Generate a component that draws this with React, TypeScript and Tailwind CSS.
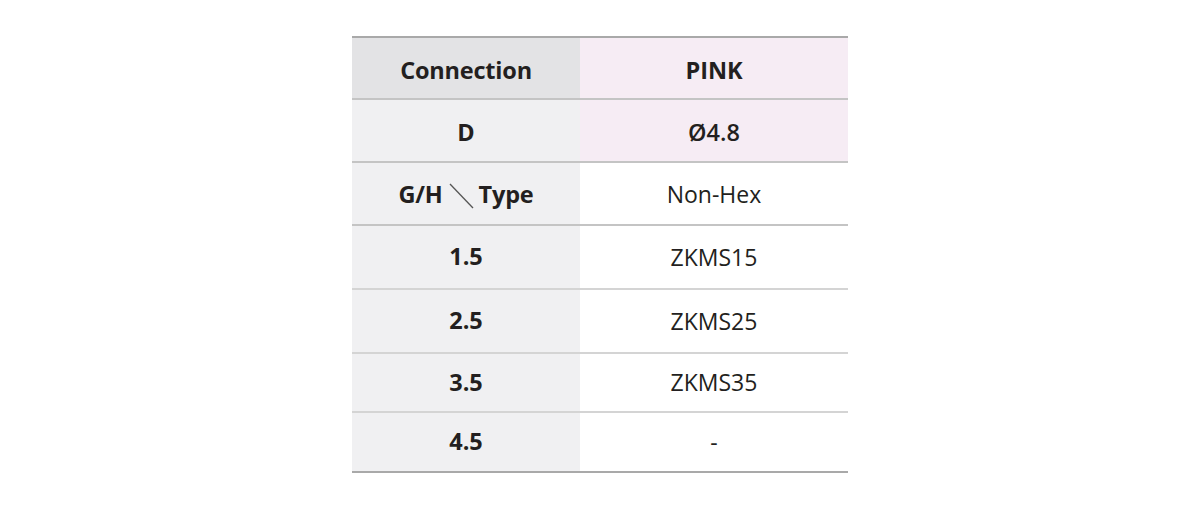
const rows = [
  { label: "1.5", value: "ZKMS15", h: "h-[64px]" },
  { label: "2.5", value: "ZKMS25", h: "h-[64px]" },
  { label: "3.5", value: "ZKMS35", h: "h-[59px]" },
  { label: "4.5", value: "-", h: "h-[58px]" },
];

export default function App() {
  return (
    <div className="w-[1200px] h-[510px] bg-white flex justify-center pt-[36px] font-['Open_Sans',sans-serif] text-[#231f20]">
      <div className="w-[496px] h-fit border-t-2 border-b-2 border-[#a9a9a9]">
        <div className="flex h-[62px] border-b-2 border-[#c4c4c4]">
          <div className="w-[228px] bg-[#e3e3e5] flex items-center justify-center pt-[6px] text-[23.5px] font-bold tracking-[-0.2px]">
            Connection
          </div>
          <div className="flex-1 bg-[#f6ecf4] flex items-center justify-center pt-[6px] text-[23.5px] font-bold">
            PINK
          </div>
        </div>
        <div className="flex h-[63px] border-b-2 border-[#c4c4c4]">
          <div className="w-[228px] bg-[#f0f0f2] flex items-center justify-center pt-[4px] text-[23.5px] font-bold">
            D
          </div>
          <div className="flex-1 bg-[#f6ecf4] flex items-center justify-center pt-[4px] text-[23.5px] font-semibold">
            Ø4.8
          </div>
        </div>
        <div className="flex h-[63px] border-b-2 border-[#c4c4c4]">
          <div className="w-[228px] bg-[#f0f0f2] flex items-center justify-center gap-[5px] pt-[2px] text-[23.5px] font-bold tracking-[-0.2px]">
            <span>G/H</span>
            <svg width="26" height="26" viewBox="0 0 26 26" className="mt-[2px]">
              <line x1="2" y1="1" x2="25" y2="25" stroke="#555" strokeWidth="1.3" />
            </svg>
            <span>Type</span>
          </div>
          <div className="flex-1 bg-white flex items-center justify-center pt-[2px] text-[23px]">
            Non-Hex
          </div>
        </div>
        {rows.map((r, i) => (
          <div
            key={r.label}
            className={`flex ${r.h} ${i < rows.length - 1 ? "border-b-2 border-[#d4d4d4]" : ""}`}
          >
            <div className="w-[228px] bg-[#f0f0f2] flex items-center justify-center text-[23.5px] font-bold">
              {r.label}
            </div>
            <div className="flex-1 bg-white flex items-center justify-center text-[23px]">
              {r.value}
            </div>
          </div>
        ))}
      </div>
    </div>
  );
}
